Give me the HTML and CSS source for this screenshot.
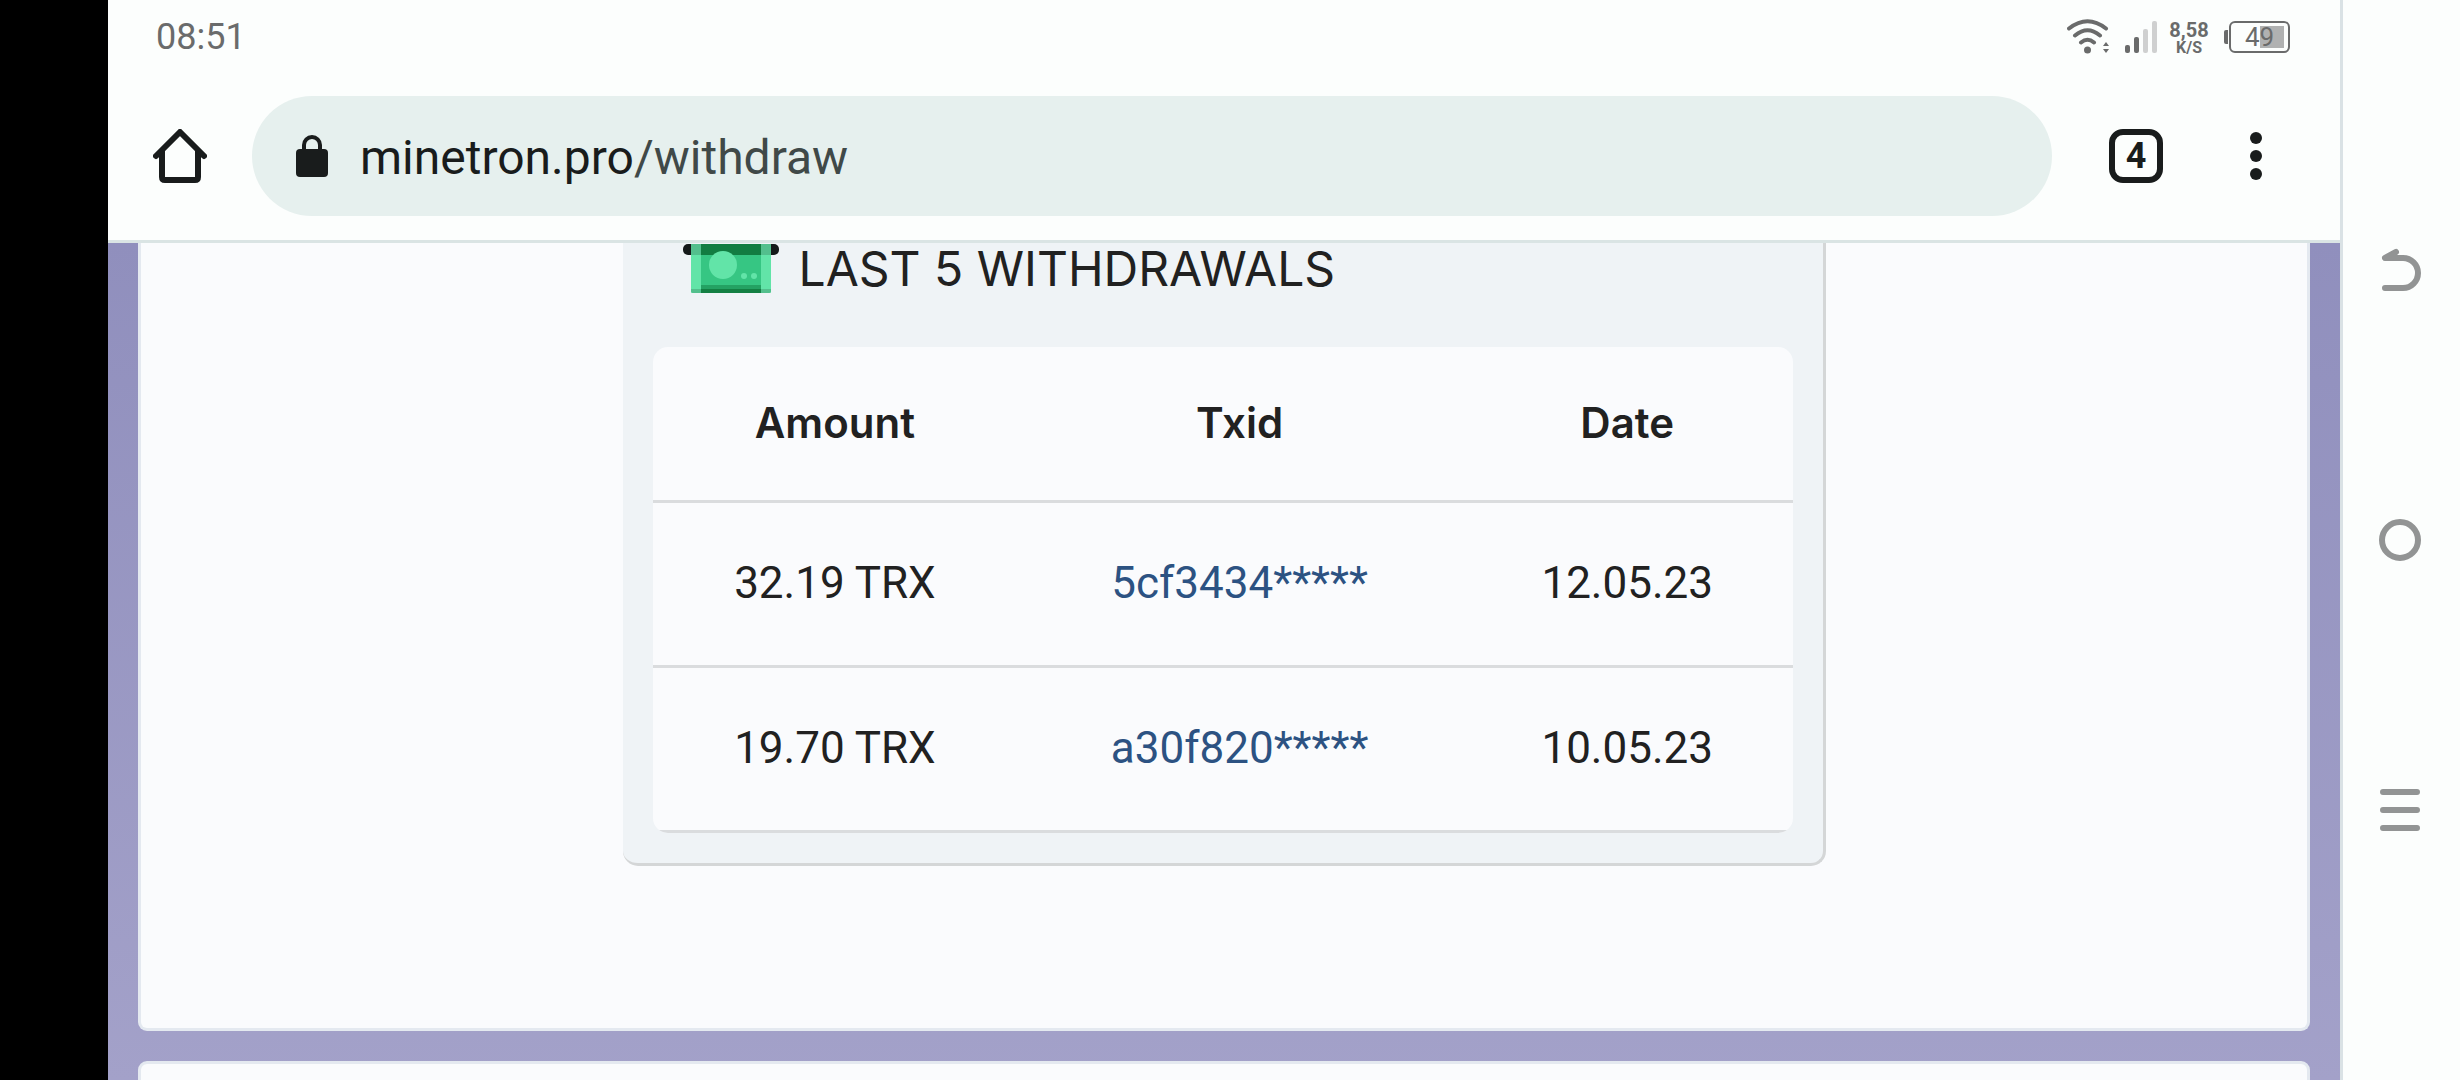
FILE: index.html
```html
<!DOCTYPE html>
<html lang="en">
<head>
<meta charset="utf-8">
<meta name="viewport" content="width=device-width, initial-scale=1">
<title>Withdraw</title>
<link rel="stylesheet" href="styles.css">
</head>
<body>
<div class="screen">
  <div class="browser">
    <header class="chrome">
      <div class="status">
        <time class="clock">08:51</time>
        <div class="indicators">
          <svg class="wifi" width="42" height="36" viewBox="0 0 42 36" fill="none" stroke="#6a6b6b" stroke-width="4" stroke-linecap="round" aria-hidden="true">
            <path d="M2 9.500Q20.500-5 39 9.500M8 16.500Q20.500 6 33 16.500M14 23.500Q20.500 18 27 23.500"/>
            <circle cx="20.500" cy="31" r="3.500" fill="#6a6b6b" stroke="none"/>
            <path d="M36 27l3-4 3 4zM36 30h6l-3 4z" fill="#6a6b6b" stroke="none"/>
          </svg>
          <svg class="signal" width="32" height="32" viewBox="0 0 32 32" aria-hidden="true">
            <rect x="0" y="24" width="5" height="8" rx="2" fill="#6a6b6b"/>
            <rect x="9" y="16" width="5" height="16" rx="2" fill="#6a6b6b"/>
            <rect x="18" y="8" width="5" height="24" rx="2" fill="#cfd0d0"/>
            <rect x="27" y="0" width="5" height="32" rx="2" fill="#cfd0d0"/>
          </svg>
          <div class="speed"><span class="rate">8,58</span><span class="unit">K/S</span></div>
          <div class="battery"><span class="level">49</span></div>
        </div>
      </div>
      <div class="toolbar">
        <button class="icon-button" aria-label="Home">
          <svg width="54" height="54" viewBox="0 0 54 54" fill="none" stroke="#191c1c" stroke-width="6" stroke-linecap="round" stroke-linejoin="round" aria-hidden="true">
            <path d="M9 22v26q0 3 3 3h30q3 0 3-3V22" stroke-linecap="butt"/>
            <path d="M3 27L27 3l24 24"/>
          </svg>
        </button>
        <button class="address" aria-label="Address">
          <svg width="32" height="42" viewBox="0 0 32 42" aria-hidden="true">
            <path d="M8 16v-6a8 8 0 0 1 16 0v6" fill="none" stroke="#191c1c" stroke-width="4"/>
            <rect y="14" width="32" height="28" rx="4" fill="#191c1c"/>
          </svg>
          <span class="url">minetron.pro<span class="path">/withdraw</span></span>
        </button>
        <button class="tabs" aria-label="Open tabs">4</button>
        <button class="icon-button menu" aria-label="More options">
          <svg width="12" height="48" viewBox="0 0 12 48" fill="#191c1c" aria-hidden="true">
            <circle cx="6" cy="6" r="6"/><circle cx="6" cy="24" r="6"/><circle cx="6" cy="42" r="6"/>
          </svg>
        </button>
      </div>
    </header>
    <main class="page">
      <section class="card card-first">
        <div class="panel">
          <h2 class="title">
            <svg width="96" height="50" viewBox="0 0 96 50" aria-hidden="true">
              <rect y="0" width="96" height="11" rx="5" fill="#15191a"/>
              <path d="M8 0h80v47q0 2-2 2H10q-2 0-2-2z" fill="#36c683"/>
              <path d="M18 0h60v11H18z" fill="#127d42"/>
              <path d="M18 41h60v4H18z" fill="#24a263"/>
              <path d="M18 45h60v4H18z" fill="#137f43"/>
              <path d="M8 11h10v38h-8q-2 0-2-2zM78 11h10v36q0 2-2 2h-8z" fill="#62e4a8"/>
              <path d="M8 0h10v11H8zM78 0h10v11H78zM8 45h10v4h-8q-2 0-2-2zM78 45h10v2q0 2-2 2h-8z" fill="#53bf8d"/>
              <circle cx="40" cy="21" r="14" fill="#62e4a8"/>
              <circle cx="61" cy="32" r="3" fill="#62e4a8"/><circle cx="71" cy="32" r="3" fill="#62e4a8"/>
            </svg>
            <span>LAST 5 WITHDRAWALS</span>
          </h2>
          <table class="withdrawals">
            <thead>
              <tr><th class="col-amount" scope="col">Amount</th><th class="col-txid" scope="col">Txid</th><th class="col-date" scope="col">Date</th></tr>
            </thead>
            <tbody>
              <tr><td>32.19 TRX</td><td><a href="#">5cf3434*****</a></td><td>12.05.23</td></tr>
              <tr><td>19.70 TRX</td><td><a href="#">a30f820*****</a></td><td>10.05.23</td></tr>
            </tbody>
          </table>
        </div>
      </section>
      <section class="card card-next"></section>
    </main>
  </div>
  <nav class="system" aria-label="System navigation">
    <button class="icon-button" aria-label="Back">
      <svg width="42" height="44" viewBox="0 0 42 44" fill="none" stroke="#929494" stroke-width="6" stroke-linecap="round" stroke-linejoin="round" aria-hidden="true">
        <path d="M17 4L6 10h18a15 15 0 0 1 0 30H6"/>
      </svg>
    </button>
    <button class="icon-button" aria-label="Home screen">
      <svg width="42" height="42" viewBox="0 0 42 42" fill="none" stroke="#929494" stroke-width="6" aria-hidden="true"><circle cx="21" cy="21" r="18"/></svg>
    </button>
    <button class="icon-button" aria-label="Recent apps">
      <svg width="40" height="42" viewBox="0 0 40 42" fill="none" stroke="#929494" stroke-width="6" stroke-linecap="round" aria-hidden="true"><path d="M3 3h34M3 21h34M3 39h34"/></svg>
    </button>
  </nav>
</div>
</body>
</html>
```
FILE: styles.css
```css
* { box-sizing: border-box; }

body {
  margin: 0;
  background: #000;
  color: #212121;
  font-family: Roboto, "Liberation Sans", sans-serif;
}

button {
  border: 0;
  padding: 0;
  background: none;
  color: inherit;
  font: inherit;
}

svg { display: block; flex: none; }

.screen {
  display: flex;
  height: 100vh;
  padding-left: 108px;
  overflow: hidden;
}

.browser {
  flex: 1;
  min-width: 0;
  display: flex;
  flex-direction: column;
}

.chrome {
  flex: none;
  background: #fcfefd;
  border-bottom: 3px solid #dae4e4;
}

.status {
  display: flex;
  align-items: center;
  justify-content: space-between;
  height: 72px;
  padding: 2px 50px 0 48px;
  color: #6a6b6b;
}

.clock { font-size: 36px; line-height: 40px; }

.indicators { display: flex; align-items: center; }
.signal { margin-left: 16px; }

.speed {
  display: flex;
  flex-direction: column;
  align-items: center;
  width: 40px;
  margin: 2px 15px 0 12px;
  font-weight: 700;
}

.rate { font-size: 20px; line-height: 20px; }
.unit { font-size: 16px; line-height: 16px; }

.battery {
  position: relative;
  display: flex;
  align-items: center;
  justify-content: center;
  width: 61px;
  height: 32px;
  margin-left: 5px;
  border: 2px solid #6a6b6b;
  border-radius: 6px;
  background: linear-gradient(#b0b1b1, #b0b1b1) 29px 3px / 24px 22px no-repeat;
}

.battery::before {
  content: "";
  position: absolute;
  left: -7px;
  top: 7px;
  width: 4px;
  height: 14px;
  border-radius: 2px 0 0 2px;
  background: #6a6b6b;
}

.level { font-size: 26px; line-height: 28px; }

.toolbar {
  display: flex;
  align-items: center;
  height: 168px;
  padding: 0 78px 0 45px;
  color: #191c1c;
}

.address {
  flex: 1;
  display: flex;
  align-items: center;
  gap: 32px;
  height: 120px;
  margin: 0 57px 0 45px;
  padding: 0 44px;
  border-radius: 60px;
  background: #e6f0ee;
  text-align: left;
}

.url { padding-top: 3px; font-size: 48px; line-height: 56px; }
.path { color: #404948; }

.tabs {
  width: 54px;
  height: 54px;
  border: 6px solid #191c1c;
  border-radius: 14px;
  font-size: 36px;
  font-weight: 700;
  line-height: 42px;
}

.menu { margin-left: 87px; }

.page {
  flex: 1;
  display: flex;
  flex-direction: column;
  gap: 30px;
  min-height: 0;
  padding: 0 30px;
  overflow: hidden;
  background: linear-gradient(#908fbd, #a3a1c9);
}

.card {
  flex: none;
  border: 3px solid #e4e9f0;
  background: #fafbfd;
}

.card-first {
  padding-bottom: 162px;
  border-top: 0;
  border-radius: 0 0 9px 9px;
}

.card-next {
  height: 120px;
  border-radius: 9px 9px 0 0;
}

.panel {
  max-width: 1203px;
  margin: 0 auto;
  padding: 0 30px 30px;
  border: solid #d4d6d7;
  border-width: 0 3px 3px 0;
  border-radius: 0 0 15px 15px;
  background: #eff3f6;
}

.title {
  display: flex;
  align-items: flex-start;
  gap: 20px;
  height: 104px;
  margin: 0;
  padding: 1px 30px 0;
  font-family: Inter, "Liberation Sans", sans-serif;
  font-size: 48px;
  font-weight: 400;
  line-height: 50px;
}

.withdrawals {
  width: 100%;
  border-collapse: separate;
  border-spacing: 0;
  border-radius: 15px;
  overflow: hidden;
  background: #fafbfd;
  text-align: center;
}

.withdrawals th,
.withdrawals td {
  padding: 0 0 3px;
  border-bottom: 3px solid #dadcde;
}

.withdrawals th {
  height: 156px;
  font-family: Inter, "Liberation Sans", sans-serif;
  font-size: 42px;
  font-weight: 600;
}

.withdrawals td { height: 165px; font-size: 44px; }
.withdrawals a { color: #2c5282; text-decoration: none; }

.col-amount { width: 32%; }
.col-txid { width: 39%; }
.col-date { width: 29%; }

.system {
  flex: none;
  display: grid;
  grid-template-rows: repeat(3, 1fr);
  place-items: center;
  width: 120px;
  padding: 12.5vh 3px 12.5vh 0;
  border-left: 3px solid #dae2e5;
  background: #fcfefd;
}
```
